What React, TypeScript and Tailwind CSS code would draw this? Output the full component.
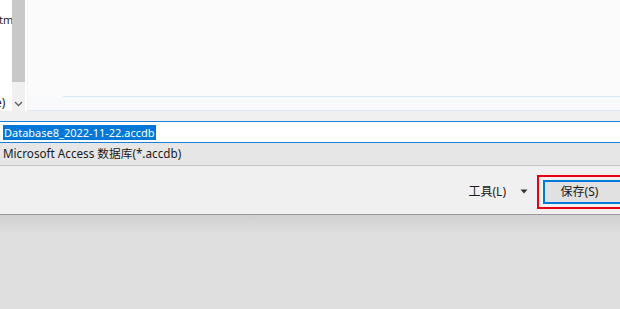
import React from "react";

function Chevron() {
  return (
    <svg width="9" height="6" viewBox="0 0 9 6" className="text-[#606060]">
      <path d="M1 1 L4.5 4.5 L8 1" fill="none" stroke="currentColor" strokeWidth="1.3" />
    </svg>
  );
}

export default function App() {
  return (
    <div
      className="w-[620px] h-[309px] overflow-hidden bg-[#dcdcdc] flex flex-col text-[12px] text-[#1a1a1a]"
      style={{ fontFamily: '"Noto Sans", "Noto Sans CJK SC", sans-serif' }}
    >
      {/* file list area */}
      <div className="flex h-[111px] bg-white">
        <div className="w-[12px] flex flex-col overflow-hidden">
          <div className="h-[13px]" />
          <div className="text-[11px] leading-[14px] -ml-[1px] whitespace-nowrap">tm</div>
          <div className="flex-1" />
          <div className="text-[12px] leading-[14px] mb-[1px] -ml-[5px] whitespace-nowrap">e)</div>
        </div>
        <div className="w-[13px] flex flex-col bg-[#f0f0f0]">
          <div className="h-[82px] bg-[#c8c8c8]" />
          <div className="flex-1 flex items-end justify-center pb-[4px]">
            <Chevron />
          </div>
        </div>
        <div className="w-[2px]" />
        <div className="w-[1px] bg-[#f0f2f5]" />
        <div className="flex-1 flex flex-col bg-[#fbfbfc]">
          <div className="h-[96px]" />
          <div className="flex h-[1px]">
            <div className="w-[35px]" />
            <div className="flex-1 bg-[#dbe6f5]" />
          </div>
          <div className="flex-1 bg-[#f9fafb]" />
          <div className="h-[1px] bg-[#dde7f4]" />
        </div>
      </div>

      <div className="h-[10px] bg-[#f0f0f0]" />

      {/* file name input */}
      <div className="h-[22px] bg-white border-y border-[#1a7fd8] flex items-center">
        <span className="ml-[3px] bg-[#0078d7] text-white leading-[15px] px-[1px] text-[11px]">
          Database8_2022-11-22.accdb
        </span>
      </div>

      {/* file type */}
      <div className="h-[23px] bg-[#e6e6e6] border-b border-[#c8c8c8] flex items-center">
        <span className="ml-[3px] text-[11.7px]">Microsoft Access 数据库(*.accdb)</span>
      </div>

      {/* footer buttons */}
      <div className="h-[49px] bg-[#f0f0f0] flex items-center justify-end border-b border-[#9a9a9a] shadow-[0_1px_2px_rgba(0,0,0,0.25)]">
        <span className="text-[12px] mr-[14px] mt-[3px]">工具(L)</span>
        <svg width="8" height="5" viewBox="0 0 8 5" className="mr-[9px] mt-[3px]">
          <path d="M0.5 0.5 L7.5 0.5 L4 4.5 Z" fill="#333" />
        </svg>
        <div className="border-2 border-[#e60012] h-[34px] pl-[4px] py-[2px] flex items-center -mr-[4px] mt-[4px]">
          <div className="w-[79px] h-[24px] bg-[#e1e1e1] border-2 border-[#0078d7] flex items-center justify-center">
            <span className="text-[12px] -ml-[6px]">保存(S)</span>
          </div>
        </div>
      </div>

      <div className="flex-1 bg-gradient-to-b from-[#d0d0d0] to-[#dfdfdf] to-[20%]" />
    </div>
  );
}
